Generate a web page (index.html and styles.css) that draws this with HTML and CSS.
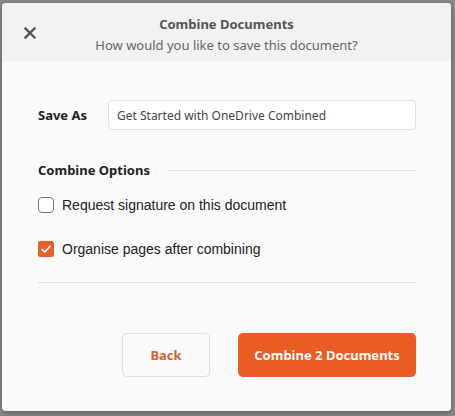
FILE: index.html
```html
<!DOCTYPE html>
<html>
<head>
<meta charset="utf-8">
<link rel="stylesheet" href="styles.css">
</head>
<body>
<div class="dialog">
  <div class="header">
    <button class="close" aria-label="Close">
      <svg width="12" height="12" viewBox="0 0 12 12"><path d="M1.5 1.5 L10.5 10.5 M10.5 1.5 L1.5 10.5" stroke="#555" stroke-width="2.4" stroke-linecap="square"/></svg>
    </button>
    <div class="title">Combine Documents</div>
    <div class="subtitle">How would you like to save this document?</div>
  </div>
  <div class="body">
    <div class="save-row">
      <label class="save-label">Save As</label>
      <div class="input">Get Started with OneDrive Combined</div>
    </div>
    <div class="section">
      <span class="section-title">Combine Options</span>
      <span class="section-line"></span>
    </div>
    <div class="option">
      <span class="box"></span>
      <span class="opt-label">Request signature on this document</span>
    </div>
    <div class="option">
      <span class="box checked">
        <svg width="16" height="16" viewBox="0 0 16 16"><path d="M4 8.3 L6.8 11 L12 5.2" fill="none" stroke="#fff" stroke-width="1.6" stroke-linecap="round" stroke-linejoin="round"/></svg>
      </span>
      <span class="opt-label">Organise pages after combining</span>
    </div>
    <div class="divider"></div>
    <div class="actions">
      <button class="btn back">Back</button>
      <button class="btn primary">Combine 2 Documents</button>
    </div>
  </div>
</div>
</body>
</html>
```
FILE: styles.css
```css
html, body {
  margin: 0;
  padding: 0;
  background: #8a8a8a;
  font-family: "Noto Sans", Arial, sans-serif;
}
body {
  padding: 3px 0 0 2px;
  height: 416px;
  box-sizing: border-box;
  overflow: hidden;
}
.dialog {
  width: 449px;
  height: 408px;
  background: #fafafa;
  border-radius: 4px;
  overflow: hidden;
  box-shadow: 0 2px 6px rgba(0,0,0,0.35);
  display: flex;
  flex-direction: column;
}
.header {
  position: relative;
  height: 59px;
  background: #f2f2f2;
  display: flex;
  flex-direction: column;
  align-items: center;
  padding-top: 11px;
  box-sizing: border-box;
}
.close {
  position: absolute;
  left: 20px;
  top: 22px;
  width: 16px;
  height: 16px;
  padding: 2px;
  border: 0;
  background: transparent;
  display: flex;
  align-items: center;
  justify-content: center;
}
.title {
  font-size: 13px;
  font-weight: 700;
  color: #555;
  line-height: 20px;
}
.subtitle {
  font-size: 13px;
  color: #666;
  line-height: 20px;
  margin-top: 1px;
}
.body {
  padding: 38px 35px 0 36px;
  display: flex;
  flex-direction: column;
}
.save-row {
  display: flex;
  align-items: center;
}
.save-label {
  width: 70px;
  font-size: 13px;
  font-weight: 700;
  color: #222;
}
.input {
  flex: 1;
  height: 30px;
  box-sizing: border-box;
  border: 1px solid #e2e2e2;
  border-radius: 4px;
  background: #fff;
  padding: 0 8px;
  font-size: 12px;
  color: #444;
  display: flex;
  align-items: center;
}
.section {
  margin-top: 30px;
  display: flex;
  align-items: center;
  height: 20px;
}
.section-title {
  font-size: 13px;
  font-weight: 700;
  color: #222;
  margin-right: 18px;
}
.section-line {
  flex: 1;
  height: 1px;
  background: #e2e2e2;
}
.option {
  display: flex;
  align-items: center;
  height: 20px;
  margin-top: 15px;
}
.option + .option {
  margin-top: 24px;
}
.box {
  width: 16px;
  height: 16px;
  box-sizing: border-box;
  border: 1px solid #777;
  border-radius: 4px;
  background: #fff;
  margin: 0 8px 0 0;
  display: flex;
}
.box.checked {
  border: 0;
  background: #e8612c;
  border-radius: 2px;
}
.opt-label {
  font-family: "Liberation Sans", Arial, sans-serif;
  font-size: 14px;
  color: #222;
}
.divider {
  margin-top: 23px;
  height: 1px;
  background: #e2e2e2;
}
.actions {
  margin-top: 50px;
  display: flex;
  justify-content: flex-end;
  gap: 28px;
}
.btn {
  height: 44px;
  border-radius: 5px;
  font-family: "Noto Sans", Arial, sans-serif;
  font-size: 13px;
  font-weight: 700;
  cursor: pointer;
}
.back {
  width: 88px;
  background: #fafafa;
  border: 1px solid #dedede;
  color: #d6642f;
}
.primary {
  width: 178px;
  background: #ea5c22;
  border: 0;
  color: #fff;
}
```
